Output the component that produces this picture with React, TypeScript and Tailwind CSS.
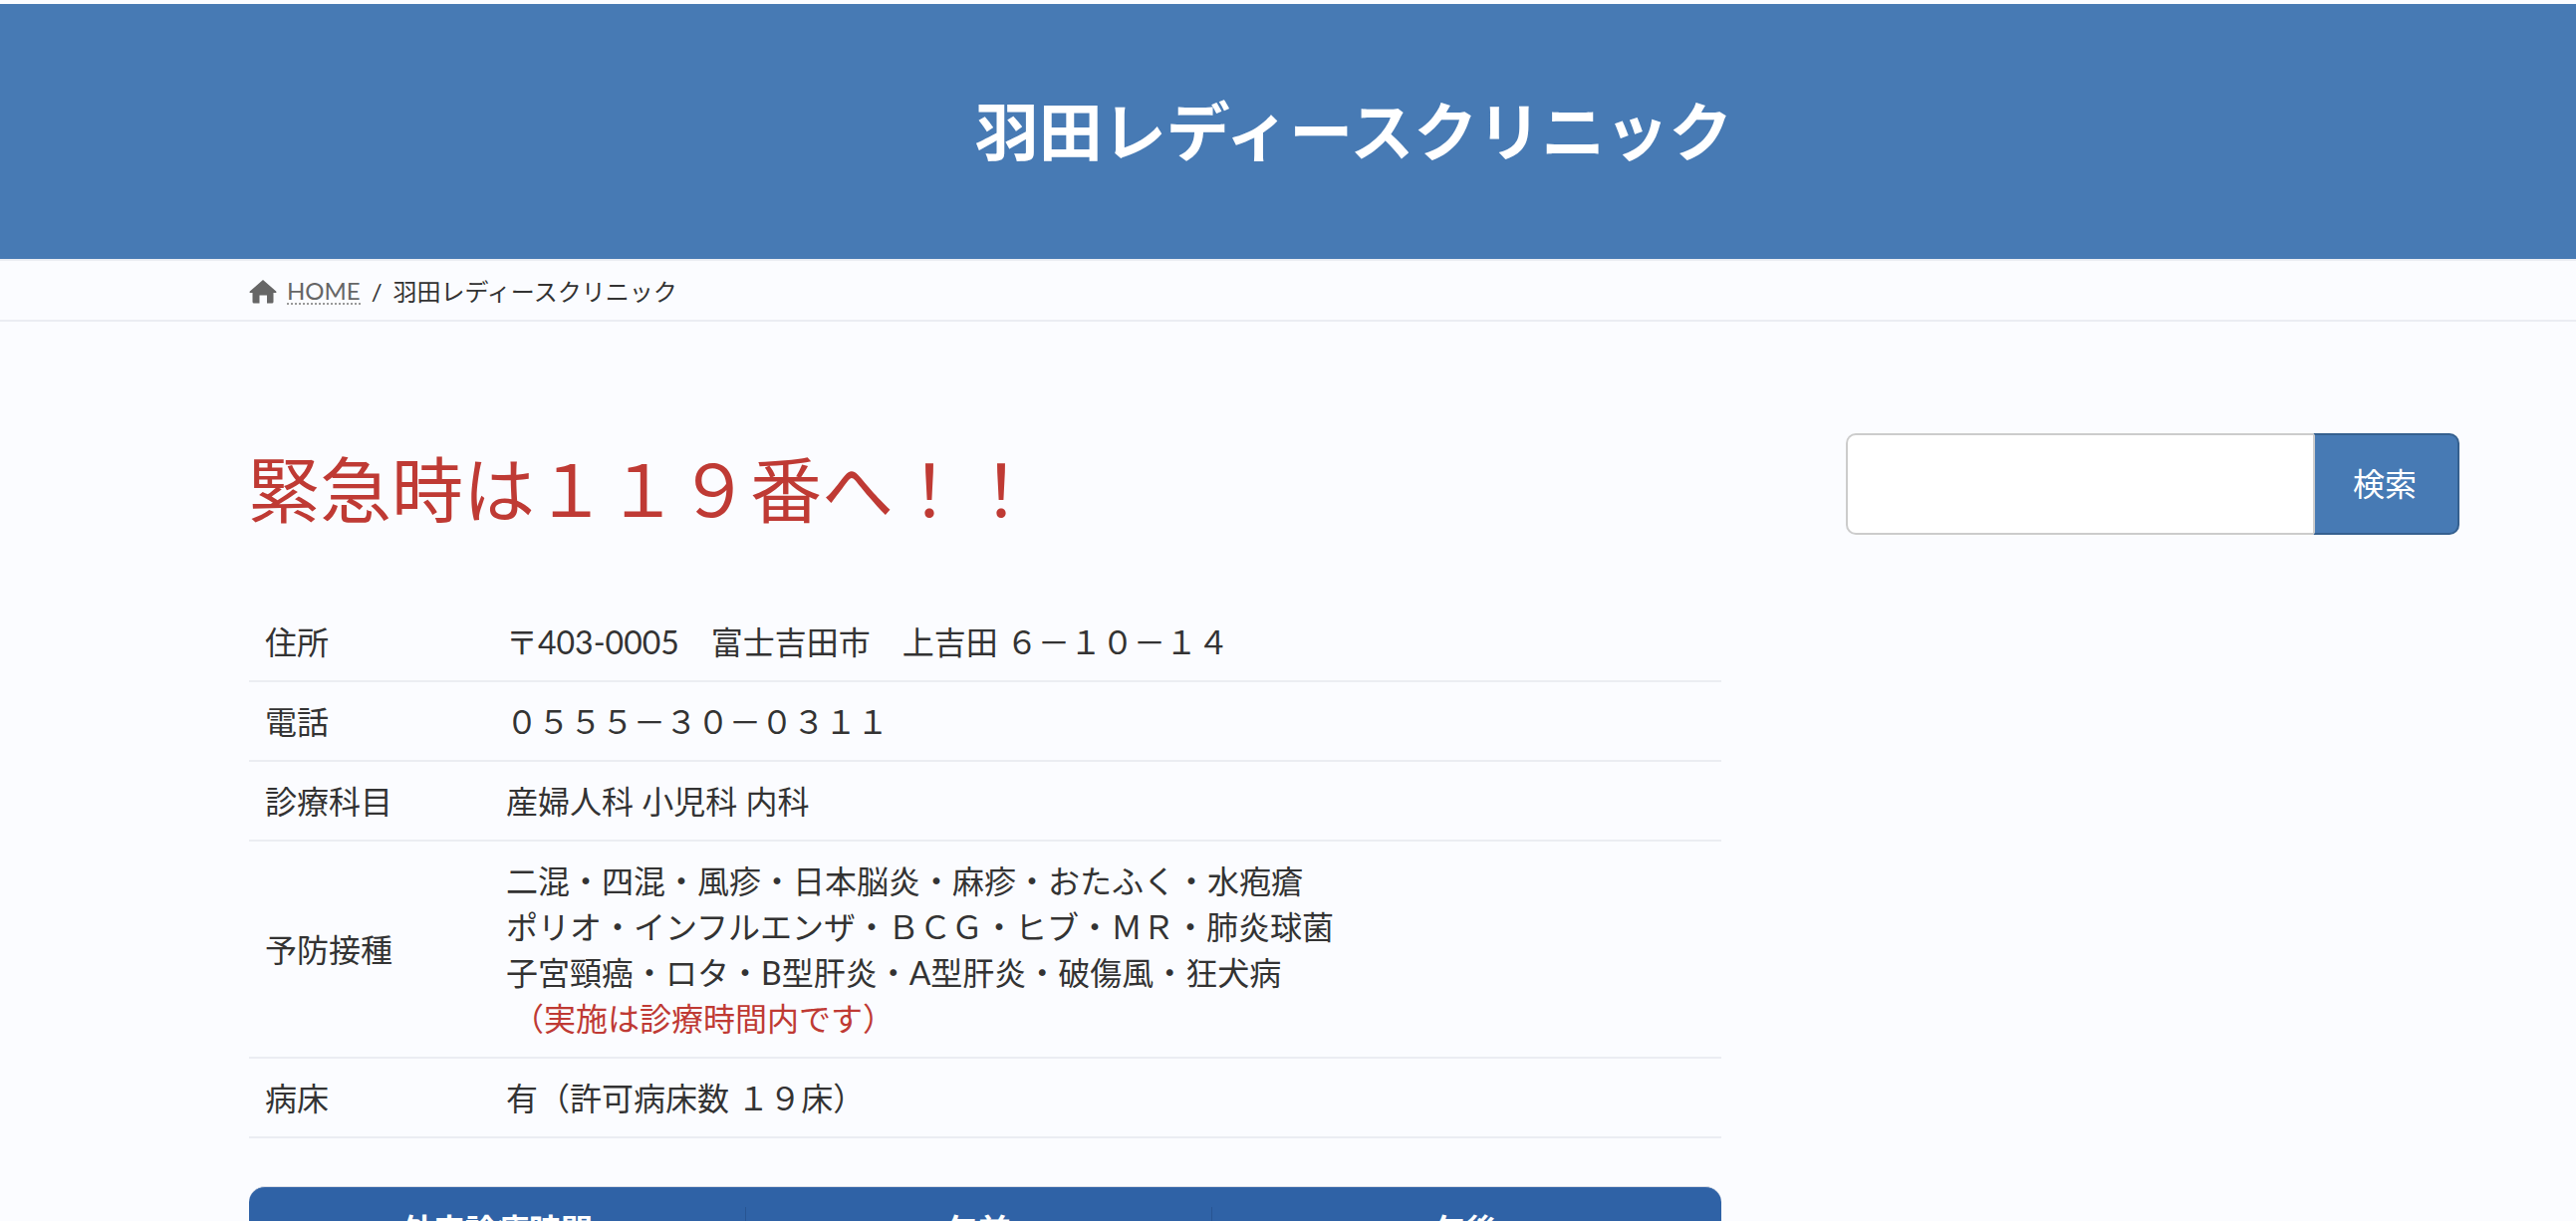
import type { ReactNode } from 'react';

function Row({ label, children }: { label: string; children: ReactNode }) {
  return (
    <div className="flex items-center border-b-2 border-[#ebedf2] pb-[15px] pt-[17px]">
      <div className="w-[258px] shrink-0 pl-4">{label}</div>
      <div>{children}</div>
    </div>
  );
}

export default function App() {
  return (
    <div className="h-[1226px] overflow-hidden bg-[#fbfcff] pt-[4px] font-['Lato','Noto_Sans_CJK_JP',sans-serif] text-[32px] leading-[46px] text-[#333]">
      <header className="flex h-[256px] items-center justify-center bg-[#477ab4] pl-[132px]">
        <h1 className="text-[64px] font-bold leading-none text-white">羽田レディースクリニック</h1>
      </header>
      <nav className="flex h-[63px] items-center border-y-2 border-[#ebedf2] pl-[250px] pt-[2px] text-[24px] leading-none">
        <svg viewBox="0 0 28 24" className="mr-[10px] h-[25px] w-[28px] fill-[#666]">
          <path d="M14 0.5 L27.2 12 Q28 13.6 26.4 13.6 L24.5 13.6 L24.5 22.5 Q24.5 24 23 24 L18 24 L18 16 L10.5 16 L10.5 24 L5 24 Q3.5 24 3.5 22.5 L3.5 13.6 L1.6 13.6 Q0 13.6 0.8 12 Z" />
        </svg>
        <span className="border-b-2 border-dotted border-[#999] text-[#666]">HOME</span>
        <span className="mx-[11px]">/</span>
        <span>羽田レディースクリニック</span>
      </nav>
      <div className="flex pl-[250px] pt-[118px]">
        <main className="w-[1478px] shrink-0">
          <h2 className="-ml-[1px] text-[72px] font-normal leading-[100px] text-[#bf3a34]">緊急時は１１９番へ！！</h2>
          <div className="mt-[64px]">
            <Row label="住所">〒403-0005　富士吉田市　上吉田 ６－１０－１４</Row>
            <Row label="電話">０５５５－３０－０３１１</Row>
            <Row label="診療科目">産婦人科 小児科 内科</Row>
            <Row label="予防接種">
              <div>二混・四混・風疹・日本脳炎・麻疹・おたふく・水疱瘡</div>
              <div>ポリオ・インフルエンザ・ＢＣＧ・ヒブ・ＭＲ・肺炎球菌</div>
              <div>子宮頸癌・ロタ・B型肝炎・A型肝炎・破傷風・狂犬病</div>
              <div className="pl-[6px] text-[#bf3a34]">（実施は診療時間内です）</div>
            </Row>
            <Row label="病床">有（許可病床数 １９床）</Row>
          </div>
          <div className="mt-[48px] flex h-[80px] w-[1478px] rounded-t-[16px] border-t border-[#d8dce6] bg-[#2f62a6] pt-[20px] font-bold text-white">
            <div className="w-[499px] border-r border-[#285592] text-center">外来診療時間</div>
            <div className="w-[468px] border-r border-[#285592] text-center">午前</div>
            <div className="flex-1 text-center">午後</div>
          </div>
        </main>
        <aside className="-mt-[6px] ml-[125px] flex h-[102px] w-[616px]">
          <input className="h-[102px] w-[469px] rounded-l-[10px] border-2 border-r-0 border-[#ccc] bg-white" />
          <button className="h-[102px] w-[147px] rounded-r-[10px] border-2 border-[#35608f] border-l-[#ccc] bg-[#477ab4] pr-[3px] text-white">検索</button>
        </aside>
      </div>
    </div>
  );
}
